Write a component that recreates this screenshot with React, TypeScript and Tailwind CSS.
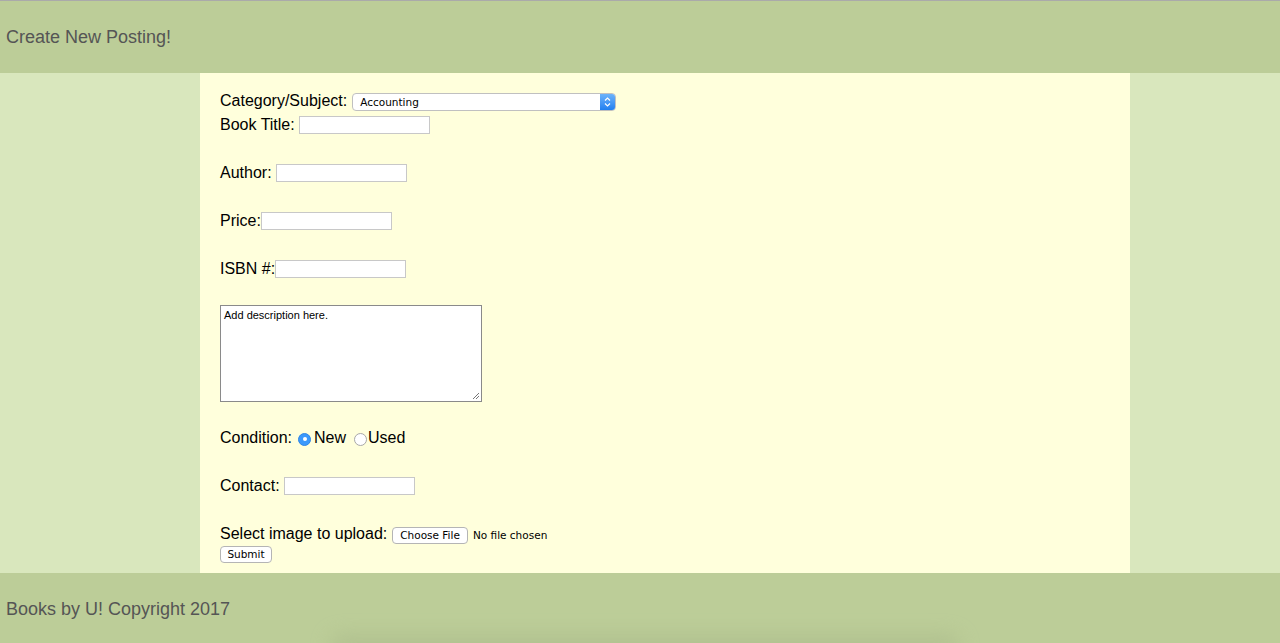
import React from 'react'

// field with a label and a plain text box
const TextRow = ({ label, gap = true }: { label: string; gap?: boolean }) => (
    <div className="flex items-center h-6">
        <span>{label}</span>
        <span className={gap ? "w-1" : ""} />
        <div className="w-[131px] h-[18px] bg-white border border-[#c8c8c8]" />
    </div>
)

const Radio = ({ checked }: { checked?: boolean }) =>
    checked ? (
        <span className="w-[13px] h-[13px] rounded-full bg-[#3b99fc] border border-[#2f86e6] flex items-center justify-center mt-[2px]">
            <span className="w-[4px] h-[4px] rounded-full bg-white" />
        </span>
    ) : (
        <span className="w-[13px] h-[13px] rounded-full bg-white border border-[#a8a8a8] mt-[2px]" />
    )

const App = () => {
    return (
        <div className="w-[1280px] h-[643px] flex flex-col bg-[#d9e7bd] text-black font-['Liberation_Sans',Arial,sans-serif] overflow-hidden relative">

            {/* header */}
            <div className="h-[73px] shrink-0 flex items-center px-[6px] bg-[#bccd98] border-t border-[#aaaaaa] text-[18px] text-[#555555]">
                Create New Posting!
            </div>

            {/* body */}
            <div className="flex-1 flex">
                <div className="w-[200px]" />
                <div className="w-[930px] bg-[#ffffdc] pt-4 pl-5 text-[16px] leading-6">

                    <div className="flex h-6">
                        <span>Category/Subject:</span>
                        <div className="ml-[5px] mt-[4px] w-[264px] h-[18px] bg-white border border-[#c0c0c0] rounded-[4px] flex items-center justify-between overflow-hidden">
                            <span className="text-[10.5px] leading-none pl-[7px] font-['DejaVu_Sans',sans-serif]">Accounting</span>
                            <div className="w-[15px] h-full bg-gradient-to-b from-[#6cb3fa] to-[#1f7ff0] flex flex-col items-center justify-center gap-[2px]">
                                <svg width="7" height="4" viewBox="0 0 7 4"><path d="M1 3.5 L3.5 1 L6 3.5" stroke="white" strokeWidth="1.2" fill="none" /></svg>
                                <svg width="7" height="4" viewBox="0 0 7 4"><path d="M1 0.5 L3.5 3 L6 0.5" stroke="white" strokeWidth="1.2" fill="none" /></svg>
                            </div>
                        </div>
                    </div>

                    <TextRow label="Book Title:" />
                    <div className="h-6" />
                    <TextRow label="Author:" />
                    <div className="h-6" />
                    <TextRow label="Price:" gap={false} />
                    <div className="h-6" />
                    <TextRow label="ISBN #:" gap={false} />
                    <div className="h-6" />

                    <div className="relative w-[262px] h-[97px] bg-white border border-[#8a8a8a] px-[3px] pt-[2px] text-[11px] leading-[14px]">
                        Add description here.
                        <svg className="absolute right-[1px] bottom-[1px]" width="8" height="8" viewBox="0 0 8 8">
                            <path d="M7 1 L1 7 M7 4 L4 7" stroke="#777" strokeWidth="1" />
                        </svg>
                    </div>

                    <div className="h-[24px]" />
                    <div className="flex items-center h-6">
                        <span>Condition:</span>
                        <span className="w-[6px]" />
                        <Radio checked />
                        <span className="ml-[3px]">New</span>
                        <span className="w-[8px]" />
                        <Radio />
                        <span className="ml-[1px]">Used</span>
                    </div>
                    <div className="h-6" />
                    <TextRow label="Contact:" />
                    <div className="h-6" />

                    <div className="flex items-center h-6">
                        <span>Select image to upload:</span>
                        <div className="ml-[5px] mt-[2px] h-[17px] px-[7px] bg-white border border-[#b5b5b5] rounded-[4px] text-[10.5px] leading-none flex items-center font-['DejaVu_Sans',sans-serif]">Choose File</div>
                        <span className="ml-[5px] mt-[2px] text-[10.5px] font-['DejaVu_Sans',sans-serif]">No file chosen</span>
                    </div>
                    <div className="h-[19px] flex items-start">
                        <div className="h-[17px] w-[52px] bg-white border border-[#b5b5b5] rounded-[4px] text-[10.5px] leading-none flex items-center justify-center font-['DejaVu_Sans',sans-serif]">Submit</div>
                    </div>
                </div>
                <div className="flex-1" />
            </div>

            {/* footer */}
            <div className="h-[70px] shrink-0 flex items-center px-[6px] pt-[2px] bg-[#bccd98] text-[18px] text-[#555555]">
                Books by U! Copyright 2017
            </div>
            <div className="absolute left-[330px] bottom-[-14px] w-[630px] h-[22px] rounded-full bg-[#a8b889] opacity-60 blur-[10px]" />
        </div>
    )
}

export default App
